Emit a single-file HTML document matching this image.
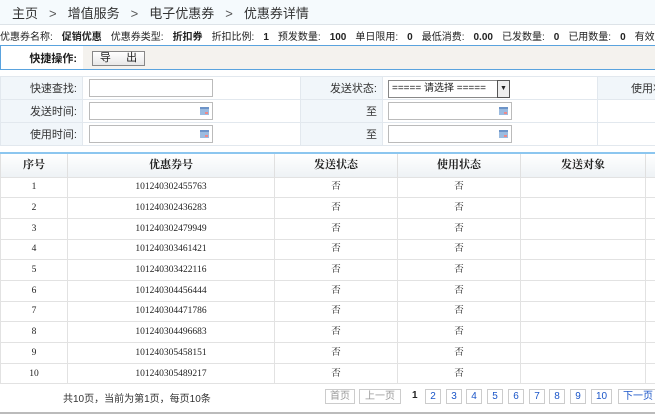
<!DOCTYPE html><html><head><meta charset="utf-8"><style>
*{margin:0;padding:0;box-sizing:border-box}
body{width:655px;height:414px;overflow:hidden;background:#fff;font-family:"Liberation Sans","Noto Sans CJK SC",sans-serif;font-size:11px;color:#222;position:relative}
.a{position:absolute}
.bc{left:0;top:0;width:655px;height:25px;background:#f5fafd;border-bottom:1px solid #dde3e8;font-size:13px;color:#333;line-height:28px;padding-left:12px;white-space:nowrap}
.bc span{margin:0 11px;color:#555}
.info{top:31px;left:0;font-size:10px;white-space:nowrap;color:#222;line-height:14px}
.info b{margin:0 9px}
.qo{left:0;top:45px;width:660px;height:25px;border:1px solid #5aa3de;background:#f4f2ee}
.qo .l{position:absolute;left:0;top:0;width:82px;height:23px;background:#fff;font-weight:bold;display:flex;align-items:center;justify-content:flex-end;padding-right:6px;font-size:11px}
.btn{position:absolute;left:91px;top:5px;width:53px;height:15px;border:1px solid #888;background:linear-gradient(#fff,#e8e8e8);font-size:11px;line-height:13px;text-align:center;white-space:nowrap}
.s{left:0;top:76px;width:660px;border-collapse:collapse;table-layout:fixed}
.s td{border:1px solid #e2e8ee;height:23px;padding:0}
.lb{background:#f1f6fa;text-align:right;padding-right:5px!important;color:#333}
.in{position:absolute;height:18px;border:1px solid #bbb;background:#fff}
.cal{position:absolute;right:3px;top:4px;width:9px;height:8px;background:#9bbbe0;border-top:2px solid #6d94c8}
.cal:after{content:"";position:absolute;right:1px;bottom:1px;width:3px;height:2px;background:#e88}
table.d{position:absolute;left:0;top:152px;width:660px;border-collapse:collapse;table-layout:fixed;font-family:"Liberation Serif","Noto Serif CJK SC",serif}
.d th{height:24px;padding:0;border-top:2px solid #8cc6ef;border-left:1px solid #e0e0e0;background:linear-gradient(#fff,#eef2f5);font-size:11px;font-weight:bold;line-height:14px}
.d td{height:20.7px;padding:0;border:1px solid #e2e2e2;text-align:center;font-size:9.5px;color:#222;line-height:12px}
.pg{top:389px;height:15px;border:1px solid #ccc;font-size:10px;text-align:center;line-height:13px;color:#1a55c8;background:#fff}
</style></head><body>
<div class="a bc">主页<span>&gt;</span>增值服务<span>&gt;</span>电子优惠券<span>&gt;</span>优惠券详情</div>
<div class="a info">优惠券名称:<b>促销优惠</b>优惠券类型:<b>折扣券</b>折扣比例:<b>1</b>预发数量:<b>100</b>单日限用:<b>0</b>最低消费:<b>0.00</b>已发数量:<b>0</b>已用数量:<b>0</b>有效</div>
<div class="a qo"><div class="l">快捷操作:</div><div class="btn">导&nbsp;&nbsp;&nbsp;&nbsp;&nbsp;出</div></div>
<table class="a s"><colgroup><col style="width:82px"><col style="width:218px"><col style="width:82px"><col style="width:215px"><col></colgroup><tr><td class="lb">快速查找:</td><td style="position:relative"><div class="in" style="left:6px;top:2px;width:124px"></div></td><td class="lb">发送状态:</td><td style="position:relative"><div class="in" style="left:5px;top:3px;width:122px;font-size:10px;line-height:16px;padding-left:3px;border-color:#888">===== 请选择 =====<div style="position:absolute;right:-1px;top:-1px;width:13px;height:18px;border:1px solid #555;background:#eee;font-size:7px;line-height:16px;text-align:center">▼</div></div></td><td class="lb" style="white-space:nowrap;overflow:hidden;text-align:left;padding-left:33px">使用状</td></tr>
<tr><td class="lb">发送时间:</td><td style="position:relative"><div class="in" style="left:6px;top:2px;width:124px"><div class="cal"></div></div></td><td class="lb">至</td><td style="position:relative"><div class="in" style="left:5px;top:2px;width:124px"><div class="cal"></div></div></td><td></td></tr>
<tr><td class="lb">使用时间:</td><td style="position:relative"><div class="in" style="left:6px;top:2px;width:124px"><div class="cal"></div></div></td><td class="lb">至</td><td style="position:relative"><div class="in" style="left:5px;top:2px;width:124px"><div class="cal"></div></div></td><td></td></tr></table>
<table class="d"><colgroup><col style="width:67px"><col style="width:207px"><col style="width:123px"><col style="width:123px"><col style="width:125px"><col></colgroup><tr><th>序号</th><th>优惠券号</th><th>发送状态</th><th>使用状态</th><th>发送对象</th><th></th></tr>
<tr><td>1</td><td>101240302455763</td><td>否</td><td>否</td><td></td><td></td></tr>
<tr><td>2</td><td>101240302436283</td><td>否</td><td>否</td><td></td><td></td></tr>
<tr><td>3</td><td>101240302479949</td><td>否</td><td>否</td><td></td><td></td></tr>
<tr><td>4</td><td>101240303461421</td><td>否</td><td>否</td><td></td><td></td></tr>
<tr><td>5</td><td>101240303422116</td><td>否</td><td>否</td><td></td><td></td></tr>
<tr><td>6</td><td>101240304456444</td><td>否</td><td>否</td><td></td><td></td></tr>
<tr><td>7</td><td>101240304471786</td><td>否</td><td>否</td><td></td><td></td></tr>
<tr><td>8</td><td>101240304496683</td><td>否</td><td>否</td><td></td><td></td></tr>
<tr><td>9</td><td>101240305458151</td><td>否</td><td>否</td><td></td><td></td></tr>
<tr><td>10</td><td>101240305489217</td><td>否</td><td>否</td><td></td><td></td></tr></table>
<div class="a" style="left:63px;top:390px;font-size:10px;color:#333">共10页，当前为第1页，每页10条</div>
<div class="a pg" style="left:325px;width:30px;color:#999">首页</div>
<div class="a pg" style="left:359px;width:42px;color:#999">上一页</div>
<div class="a" style="left:412px;top:390px;font-size:10px;font-weight:bold">1</div>
<div class="a pg" style="left:425px;width:16px">2</div>
<div class="a pg" style="left:446px;width:16px">3</div>
<div class="a pg" style="left:466px;width:16px">4</div>
<div class="a pg" style="left:487px;width:16px">5</div>
<div class="a pg" style="left:508px;width:16px">6</div>
<div class="a pg" style="left:529px;width:16px">7</div>
<div class="a pg" style="left:549px;width:16px">8</div>
<div class="a pg" style="left:570px;width:16px">9</div>
<div class="a pg" style="left:591px;width:21px">10</div>
<div class="a pg" style="left:618px;width:40px">下一页</div>
<div class="a" style="left:0;top:412px;width:655px;height:2px;background:#bbb"></div>
</body></html>
